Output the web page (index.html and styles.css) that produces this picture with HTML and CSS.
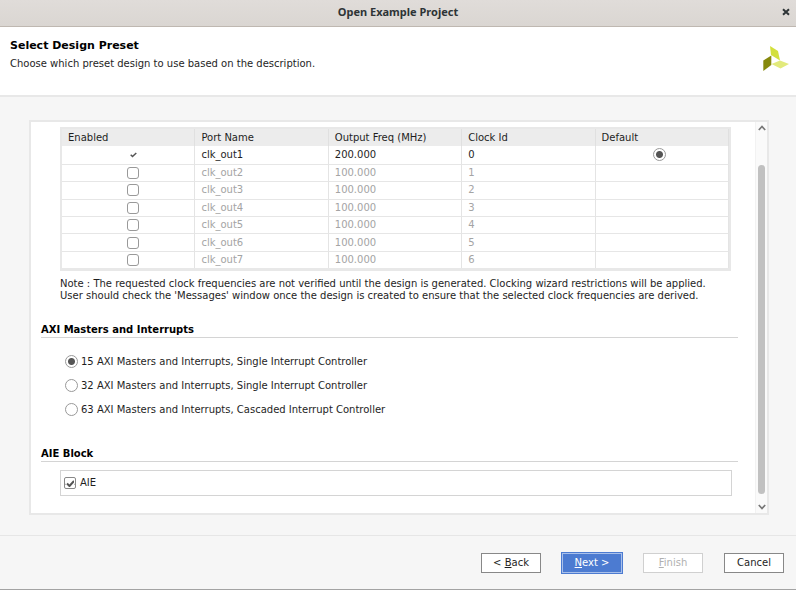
FILE: index.html
```html
<!DOCTYPE html>
<html lang="en">
<head>
<meta charset="utf-8">
<title>Open Example Project</title>
<link rel="stylesheet" href="styles.css">
</head>
<body>
<div class="titlebar">
  <h1 class="window-title">Open Example Project</h1>
  <button class="close" type="button" aria-label="Close"><svg width="8" height="8" viewBox="0 0 8 8"><path d="M1 1.2 7 6.8M7 1.2 1 6.8" stroke="#2e3436" stroke-width="2"/></svg></button>
</div>
<header class="header">
  <div>
    <h2 class="page-title">Select Design Preset</h2>
    <p class="subtitle">Choose which preset design to use based on the description.</p>
  </div>
  <svg class="logo" width="26" height="26" viewBox="0 0 26 26">
    <path d="M7 0 15 5 17 14.500 8 9Z" fill="#d3e03b"/>
    <path d="M.3 14.500 8.300 9.500V19L.3 25Z" fill="#86890c"/>
    <path d="M8.500 18 17 14.500 26 18 17.500 22.500Z" fill="#e2ea7c"/>
  </svg>
</header>
<main class="main">
  <div class="panel">
    <div class="content">
      <table class="clocks">
        <thead><tr><th>Enabled</th><th>Port Name</th><th>Output Freq (MHz)</th><th>Clock Id</th><th>Default</th></tr></thead>
        <tbody>
          <tr class="active"><td class="center"><svg width="7" height="6" viewBox="0 0 7 6" role="img" aria-label="Enabled"><path d="M.7 2.800 2.500 4.500 6.300 1" fill="none" stroke="#555" stroke-width="1.500"/></svg></td><td>clk_out1</td><td>200.000</td><td>0</td><td class="default"><input class="radio" type="radio" name="default" aria-label="Default clock clk_out1" checked></td></tr>
          <tr><td class="center"><input class="box" type="checkbox" aria-label="Enable clk_out2"></td><td>clk_out2</td><td>100.000</td><td>1</td><td></td></tr>
          <tr><td class="center"><input class="box" type="checkbox" aria-label="Enable clk_out3"></td><td>clk_out3</td><td>100.000</td><td>2</td><td></td></tr>
          <tr><td class="center"><input class="box" type="checkbox" aria-label="Enable clk_out4"></td><td>clk_out4</td><td>100.000</td><td>3</td><td></td></tr>
          <tr><td class="center"><input class="box" type="checkbox" aria-label="Enable clk_out5"></td><td>clk_out5</td><td>100.000</td><td>4</td><td></td></tr>
          <tr><td class="center"><input class="box" type="checkbox" aria-label="Enable clk_out6"></td><td>clk_out6</td><td>100.000</td><td>5</td><td></td></tr>
          <tr><td class="center"><input class="box" type="checkbox" aria-label="Enable clk_out7"></td><td>clk_out7</td><td>100.000</td><td>6</td><td></td></tr>
        </tbody>
      </table>
      <p class="note">Note : The requested clock frequencies are not verified until the design is generated. Clocking wizard restrictions will be applied.<br>User should check the 'Messages' window once the design is created to ensure that the selected clock frequencies are derived.</p>
      <section>
        <h3 class="section-title">AXI Masters and Interrupts</h3>
        <div class="options">
          <label class="option"><input class="radio" type="radio" name="axi" checked>15 AXI Masters and Interrupts, Single Interrupt Controller</label>
          <label class="option"><input class="radio" type="radio" name="axi">32 AXI Masters and Interrupts, Single Interrupt Controller</label>
          <label class="option"><input class="radio" type="radio" name="axi">63 AXI Masters and Interrupts, Cascaded Interrupt Controller</label>
        </div>
      </section>
      <section>
        <h3 class="section-title">AIE Block</h3>
        <label class="aie"><input class="check" type="checkbox" checked>AIE</label>
      </section>
    </div>
    <div class="scrollbar">
      <svg width="8" height="6" viewBox="0 0 8 6"><path d="M.8 5 4 1.500 7.200 5" fill="none" stroke="#777" stroke-width="1.700"/></svg>
      <div class="thumb"></div>
      <svg width="8" height="6" viewBox="0 0 8 6"><path d="M.8 1 4 4.500 7.200 1" fill="none" stroke="#777" stroke-width="1.700"/></svg>
    </div>
  </div>
</main>
<footer class="footer">
  <button class="btn" type="button">&lt; <u>B</u>ack</button>
  <button class="btn primary" type="button"><u>N</u>ext &gt;</button>
  <button class="btn" type="button" disabled><u>F</u>inish</button>
  <button class="btn" type="button">Cancel</button>
</footer>
</body>
</html>
```

FILE: styles.css
```css
* { box-sizing: border-box; }
body {
  margin: 0;
  min-height: 100vh;
  display: flex;
  flex-direction: column;
  background: #f6f6f6;
  border-bottom: 1px solid #a3a3a3;
  color: #1e1e1e;
  font: 10px/12px "DejaVu Sans", sans-serif;
}
h1, h2, h3, p { margin: 0; }
.titlebar {
  display: grid;
  grid-template-columns: 1fr auto 1fr;
  align-items: center;
  height: 27px;
  padding: 0 6px 2px 6px;
  background: linear-gradient(#e0dcd9, #dad6d2);
  border-bottom: 1px solid #bfb8b1;
}
.window-title {
  grid-column: 2;
  font: bold 11px/16px "Noto Sans", sans-serif;
  color: #2e3436;
}
.close {
  justify-self: end;
  display: flex;
  padding: 0;
  border: 0;
  background: none;
}
.header {
  display: flex;
  justify-content: space-between;
  height: 70px;
  padding: 12px 7px 0 10px;
  background: #fff;
  border-bottom: 2px solid #e8e8e8;
}
.page-title { font-size: 11px; line-height: 14px; color: #000; }
.subtitle { margin-top: 5px; }
.logo { margin-top: 7px; }
.main { flex: 1; display: flex; padding: 23px 27px 20px 29px; }
.panel {
  flex: 1;
  display: flex;
  background: #fff;
  border: 2px solid #e8e8e8;
}
.content { flex: 1; padding: 5px 17px 17px 10px; }
.clocks {
  width: calc(100% - 26px);
  height: 144px;
  margin-left: 19px;
  table-layout: fixed;
  border-spacing: 0;
  border: 2px solid #e8e8e8;
  border-bottom-width: 3px;
}
.clocks th {
  height: 17px;
  padding: 0 6px;
  background: #ececec;
  border-right: 1px solid #e0e0e0;
  font-weight: normal;
  text-align: left;
}
.clocks td {
  padding: 0 6px;
  border-right: 1px solid #e4e4e4;
  border-bottom: 1px solid #e6e6e6;
  color: #a4a4a4;
}
.clocks tr:last-child td { border-bottom: 0; }
.clocks .active td { color: #1e1e1e; }
.clocks .center { padding: 0 0 0 10px; }
.clocks .default { padding: 0 5px 0 0; }
.center > *, .default > * { display: block; margin: 0 auto; }
input { appearance: none; flex: none; margin: 0; background: #fff; }
.box {
  width: 12px;
  height: 12px;
  border: 1px solid #999;
  border-radius: 3px;
}
.box:checked { background: #555; }
.radio {
  width: 13px;
  height: 13px;
  border: 1px solid #999;
  border-radius: 50%;
}
.radio:checked { background: radial-gradient(circle, #555 0 3px, #fff 4px); }
.note { margin: 7px 0 0 19px; }
.section-title {
  padding-bottom: 1px;
  border-bottom: 1px solid #d4d4d4;
  font-size: 10px;
  line-height: 13px;
  color: #000;
}
section { margin-top: 21px; }
.options {
  display: flex;
  flex-direction: column;
  gap: 11px;
  padding: 17px 0 10px 24px;
}
.option { display: flex; align-items: center; gap: 3px; height: 13px; }
.aie {
  display: flex;
  align-items: center;
  gap: 4px;
  height: 26px;
  margin: 8px 6px 0 19px;
  padding-left: 3px;
  border: 1px solid #d4d4d4;
}
.check {
  width: 12px;
  height: 12px;
  border: 1px solid #888;
  border-radius: 2px;
}
.check:checked {
  background: url("data:image/svg+xml,%3Csvg xmlns='http://www.w3.org/2000/svg' viewBox='0 0 9 9'%3E%3Cpath d='M1 4.500 3.500 7 8 2' fill='none' stroke='%23555' stroke-width='2'/%3E%3C/svg%3E") center / 9px 9px;
}
.scrollbar {
  width: 12px;
  display: flex;
  flex-direction: column;
  align-items: center;
  padding: 3px 1px 3px 1px;
  background: #fafafa;
  border-left: 1px solid #f2f2f2;
}
.thumb {
  flex: 1;
  width: 7px;
  margin: 34px 1px 10px 0;
  border-radius: 4px;
  background: #c1c1c1;
}
.footer {
  display: flex;
  justify-content: flex-end;
  gap: 21px;
  height: 54px;
  padding: 17px 12px 0 0;
  border-top: 1px solid #e6e6e6;
}
.btn {
  width: 60px;
  height: 20px;
  padding: 0;
  border: 1px solid #888;
  background: #fff;
  color: #1e1e1e;
  font: inherit;
}
.btn:disabled { border-color: #d0d0d0; color: #b0b0b0; }
.primary {
  border-color: #a9c0ea;
  background: #4c7bd1;
  outline: 1px solid #4c7bd1;
  color: #fff;
}
```
